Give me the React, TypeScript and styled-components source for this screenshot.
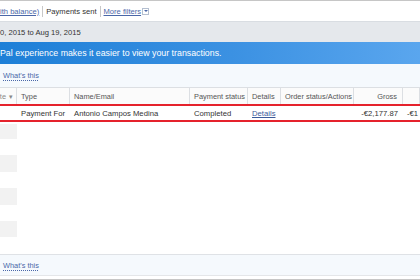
import styled, { createGlobalStyle } from "styled-components";

const GlobalStyle = createGlobalStyle`
  *, *::before, *::after {
    box-sizing: border-box;
  }
  html, body {
    margin: 0;
    padding: 0;
    background: #fff;
  }
  body {
    width: 420px;
    height: 280px;
    overflow: hidden;
    font-family: "Liberation Sans", Arial, sans-serif;
  }
`;

const Page = styled.div`
  width: 420px;
  height: 280px;
  overflow: hidden;
  display: flex;
  flex-direction: column;
  font-size: 7.7px;
  color: #333;
  & > * {
    flex-shrink: 0;
  }
`;

const FilterBar = styled.div`
  height: 21px;
  border-top: 1px solid #c6c6c6;
  display: flex;
  align-items: center;
  gap: 3px;
  white-space: nowrap;
`;

const FilterLink = styled.a`
  color: #4a67a8;
  text-decoration: underline;
  font-size: 7.6px;
`;

const FilterText = styled.span`
  font-size: 7.6px;
  color: #333;
`;

const Divider = styled.span`
  width: 1px;
  height: 11px;
  background: #c8c8c8;
`;

const DropBox = styled.span`
  width: 7px;
  height: 7px;
  border: 1px solid #b4bfd0;
  display: flex;
  align-items: center;
  justify-content: center;
  margin-left: -2px;
  &::after {
    content: "";
    border-left: 2px solid transparent;
    border-right: 2px solid transparent;
    border-top: 2px solid #4a67a8;
  }
`;

const DateBar = styled.div`
  height: 21px;
  background: #e5e8ec;
  border-top: 1px solid #d9dde2;
  display: flex;
  align-items: center;
  font-size: 7.6px;
  color: #333;
  white-space: nowrap;
`;

const Banner = styled.div`
  height: 22px;
  background: linear-gradient(90deg, #1d7fd7 0%, #3b91e2 55%, #5aa6ee 100%);
  color: #fff;
  display: flex;
  align-items: center;
  font-size: 8.8px;
  white-space: nowrap;
`;

const HelpBar = styled.div<{ $bottom?: boolean }>`
  height: ${(p) => (p.$bottom ? "22px" : "23px")};
  background: #f5f9fd;
  display: flex;
  align-items: center;
  padding-left: 3px;
  border-top: ${(p) => (p.$bottom ? "1px solid #dfe2e6" : "none")};
  border-bottom: ${(p) => (p.$bottom ? "1px solid #e4e6e9" : "none")};
`;

const HelpLink = styled.a`
  color: #4a67a8;
  font-size: 7.4px;
  text-decoration: underline dotted;
  text-underline-offset: 2px;
`;

const Row = styled.div`
  display: grid;
  grid-template-columns: 17px 53px 120px 58px 33px 73px 49px 1fr;
  white-space: nowrap;
`;

const HeadRow = styled(Row)`
  height: 17px;
  border-top: 1px solid #dcdfe3;
  background: #fbfbfb;
`;

const HeadCell = styled.div<{ $right?: boolean }>`
  display: flex;
  align-items: center;
  justify-content: ${(p) => (p.$right ? "flex-end" : "flex-start")};
  padding: 0 ${(p) => (p.$right ? "5px" : "0")} 0 ${(p) => (p.$right ? "0" : "4px")};
  border-right: 1px solid #dcdfe3;
  color: #555;
  font-size: 7.4px;
  overflow: hidden;
`;

const SortCell = styled(HeadCell)`
  justify-content: flex-end;
  padding: 0 3px 0 0;
  color: #888;
  gap: 3px;
`;

const HighlightRow = styled(Row)`
  height: 18px;
  border-top: 2px solid #e5222c;
  border-bottom: 2px solid #e5222c;
`;

const Cell = styled.div<{ $right?: boolean }>`
  display: flex;
  align-items: center;
  justify-content: ${(p) => (p.$right ? "flex-end" : "flex-start")};
  padding: 0 ${(p) => (p.$right ? "5px" : "0")} 0 ${(p) => (p.$right ? "0" : "4px")};
  font-size: 7.7px;
  color: #333;
  overflow: hidden;
`;

const DetailsLink = styled.a`
  color: #3b5a9a;
  text-decoration: underline;
`;

const Body = styled.div`
  padding-top: 2px;
  height: 132px;
`;

const EmptyRow = styled.div<{ $h: number; $shaded?: boolean }>`
  height: ${(p) => p.$h}px;
  display: flex;
  &::before {
    content: "";
    width: 17px;
    background: ${(p) => (p.$shaded ? "#f2f2f2" : "transparent")};
  }
`;

const BottomLine = styled.div`
  margin-top: 3px;
  height: 1px;
  background: #c6c6c6;
`;

const emptyRows: [number, boolean][] = [
  [15, true],
  [16, false],
  [17, true],
  [16, false],
  [17, true],
  [16, false],
  [16, true],
  [17, false],
];

export default function App() {
  return (
    <>
      <GlobalStyle />
      <Page>
        <FilterBar>
          <FilterLink>ith balance)</FilterLink>
          <Divider />
          <FilterText>Payments sent</FilterText>
          <Divider />
          <FilterLink>More filters</FilterLink>
          <DropBox />
        </FilterBar>
        <DateBar>0, 2015 to Aug 19, 2015</DateBar>
        <Banner>Pal experience makes it easier to view your transactions.</Banner>
        <HelpBar>
          <HelpLink>What's this</HelpLink>
        </HelpBar>
        <HeadRow>
          <SortCell>
            <span>te</span>
            <span>▾</span>
          </SortCell>
          <HeadCell>Type</HeadCell>
          <HeadCell>Name/Email</HeadCell>
          <HeadCell>Payment status</HeadCell>
          <HeadCell>Details</HeadCell>
          <HeadCell>Order status/Actions</HeadCell>
          <HeadCell $right>Gross</HeadCell>
          <HeadCell />
        </HeadRow>
        <HighlightRow>
          <Cell />
          <Cell>Payment For</Cell>
          <Cell>Antonio Campos Medina</Cell>
          <Cell>Completed</Cell>
          <Cell>
            <DetailsLink>Details</DetailsLink>
          </Cell>
          <Cell />
          <Cell $right>-€2,177.87</Cell>
          <Cell>-€1</Cell>
        </HighlightRow>
        <Body>
          {emptyRows.map(([h, shaded], i) => (
            <EmptyRow key={i} $h={h} $shaded={shaded} />
          ))}
        </Body>
        <HelpBar $bottom>
          <HelpLink>What's this</HelpLink>
        </HelpBar>
        <BottomLine />
      </Page>
    </>
  );
}
